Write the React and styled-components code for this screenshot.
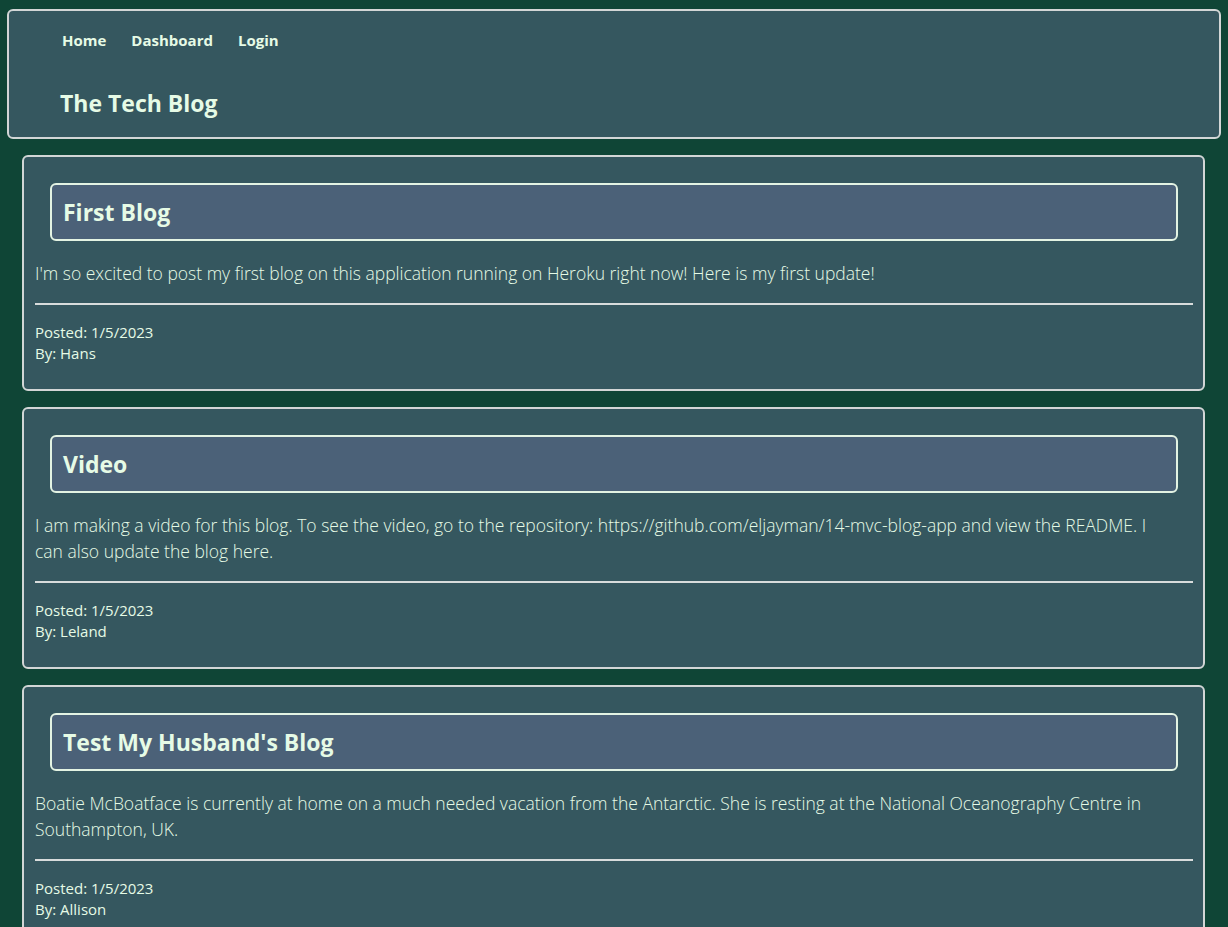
import React from "react";
import styled, { createGlobalStyle } from "styled-components";

const Global = createGlobalStyle`
  html, body { margin: 0; padding: 0; }
  body {
    background: #0f4536;
    font-family: "Open Sans", "Noto Sans", sans-serif;
    color: #e6fbe6;
  }
`;

const Page = styled.div`
  padding: 9px 7px 0 7px;
  display: flex;
  flex-direction: column;
`;

const Header = styled.header`
  border: 2px solid #d2d6d6;
  border-radius: 6px;
  background: #35575f;
  height: 130px;
  box-sizing: border-box;
  display: flex;
  flex-direction: column;
  padding: 19px 0 0 51px;
`;

const Nav = styled.nav`
  display: flex;
  gap: 25px;
  padding-left: 2px;
`;

const NavLink = styled.a`
  font-weight: 700;
  font-size: 15px;
  color: #e6fbe6;
  text-decoration: none;
  line-height: 20px;
`;

const SiteTitle = styled.h1`
  margin: 38px 0 0 0;
  font-size: 23px;
  font-weight: 700;
  line-height: 30px;
`;

const Main = styled.main`
  display: flex;
  flex-direction: column;
  gap: 16px;
  padding: 16px 16px 0 15px;
`;

const Card = styled.article`
  border: 2px solid #d2d6d6;
  border-radius: 6px;
  background: #35575f;
  padding: 26px 10px 25px 11px;
`;

const TitleBox = styled.div`
  margin: 0 15px 0 15px;
  border: 2px solid #e3f3e3;
  border-radius: 6px;
  background: #4b6178;
  height: 58px;
  box-sizing: border-box;
  display: flex;
  align-items: center;
  padding-left: 11px;
`;

const PostTitle = styled.h2`
  margin: 0;
  font-size: 23px;
  font-weight: 700;
  line-height: 30px;
`;

const Body = styled.p`
  margin: 19px 0 0 0;
  padding-right: 22px;
  font-size: 17.5px;
  font-weight: 300;
  line-height: 26px;
`;

const Rule = styled.hr`
  margin: 17px 0 0 0;
  border: none;
  border-top: 2px solid #d8dcdc;
`;

const Meta = styled.div`
  margin-top: 17px;
  font-size: 15px;
  line-height: 21px;
`;

const posts = [
  {
    title: "First Blog",
    body: "I'm so excited to post my first blog on this application running on Heroku right now! Here is my first update!",
    by: "Hans",
  },
  {
    title: "Video",
    body: "I am making a video for this blog. To see the video, go to the repository: https://github.com/eljayman/14-mvc-blog-app and view the README. I can also update the blog here.",
    by: "Leland",
  },
  {
    title: "Test My Husband's Blog",
    body: "Boatie McBoatface is currently at home on a much needed vacation from the Antarctic. She is resting at the National Oceanography Centre in Southampton, UK.",
    by: "Allison",
  },
];

export default function App() {
  return (
    <>
      <Global />
      <Page>
        <Header>
          <Nav>
            <NavLink href="#">Home</NavLink>
            <NavLink href="#">Dashboard</NavLink>
            <NavLink href="#">Login</NavLink>
          </Nav>
          <SiteTitle>The Tech Blog</SiteTitle>
        </Header>
        <Main>
          {posts.map((p) => (
            <Card key={p.title}>
              <TitleBox>
                <PostTitle>{p.title}</PostTitle>
              </TitleBox>
              <Body>{p.body}</Body>
              <Rule />
              <Meta>
                <div>Posted: 1/5/2023</div>
                <div>By: {p.by}</div>
              </Meta>
            </Card>
          ))}
        </Main>
      </Page>
    </>
  );
}
